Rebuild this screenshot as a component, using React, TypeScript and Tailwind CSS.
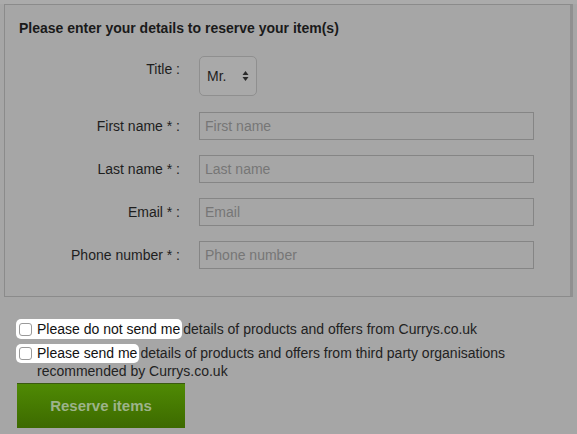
import React from "react";

const font = { fontFamily: '"Liberation Sans", Arial, sans-serif' };

function Row({ label, placeholder }: { label: string; placeholder: string }) {
  return (
    <div className="flex items-center h-[28px]">
      <div className="w-[176px] text-right text-[14px] text-[#1e1e1e] pr-[1px]">{label}</div>
      <div className="ml-[18px] w-[335px] h-[28px] border border-[#858585] flex items-center pl-[5px] text-[14px] text-[#767676]">
        {placeholder}
      </div>
    </div>
  );
}

function Box() {
  return <span className="inline-block w-[13px] h-[13px] rounded-[3px] border border-[#9a9a9a] bg-white" />;
}

export default function App() {
  return (
    <div style={font} className="w-[577px] h-[434px] bg-[#a6a6a6] overflow-hidden relative">
      <div className="h-[4px] bg-[#ababab]" />
      <div className="mx-[4px] h-[293px] border border-[#8b8b8b] border-r-[3px] border-r-[#909090] pt-[15px] pl-[14px]">
        <div className="text-[14px] leading-[17px] font-bold text-[#1a1a1a]">
          Please enter your details to reserve your item(s)
        </div>
        <div className="flex mt-[19px] pl-[0px]">
          <div className="w-[162px] text-right text-[14px] text-[#1e1e1e] pt-[3px] pr-[1px]">Title :</div>
          <div className="ml-[18px] w-[58px] h-[40px] rounded-[5px] border border-[#8f8f8f] bg-[#a9a9a9] flex items-center justify-between pl-[7px] pr-[7px] mt-0">
            <span className="text-[14px] text-[#1e1e1e] mt-[1px]">Mr.</span>
            <svg width="7" height="12" viewBox="0 0 7 12">
              <path d="M3.5 1 L6.5 5 L0.5 5 Z" fill="#2a2a2a" />
              <path d="M3.5 11 L6.5 7 L0.5 7 Z" fill="#2a2a2a" />
            </svg>
          </div>
        </div>
        <div className="flex flex-col gap-[15px] mt-[16px] -ml-[14px]">
          <Row label="First name * :" placeholder="First name" />
          <Row label="Last name * :" placeholder="Last name" />
          <Row label="Email * :" placeholder="Email" />
          <Row label="Phone number * :" placeholder="Phone number" />
        </div>
      </div>
      <div className="pl-[16px] mt-[22px] text-[14px] text-[#222]">
        <div className="flex items-center h-[20px]">
          <span className="flex items-center bg-white rounded-[5px] h-[20px] pl-[3px] pr-[2px]">
            <Box />
            <span className="ml-[5px] text-[#111]">Please do not send me</span>
          </span>
          <span className="ml-[1px]">details of products and offers from Currys.co.uk</span>
        </div>
        <div className="flex items-start mt-[5px]">
          <span className="flex items-center bg-white rounded-l-[5px] h-[19px] pl-[3px] w-[21px]">
            <Box />
          </span>
          <div className="leading-[16px] w-[480px]">
            <span className="bg-white rounded-r-[5px] inline-block h-[19px] leading-[19px] pr-[2px] text-[#111]">Please send me</span>
            <span className="ml-[1px]">details of products and offers from third party organisations</span>
            <br />
            recommended by Currys.co.uk
          </div>
        </div>
        <button className="mt-[4px] ml-[1px] w-[168px] h-[45px] bg-gradient-to-b from-[#4f8a04] to-[#3d6a00] border-t border-t-[#3a5a10] text-[15px] font-bold text-[#9db38a]">
          Reserve items
        </button>
      </div>
    </div>
  );
}
